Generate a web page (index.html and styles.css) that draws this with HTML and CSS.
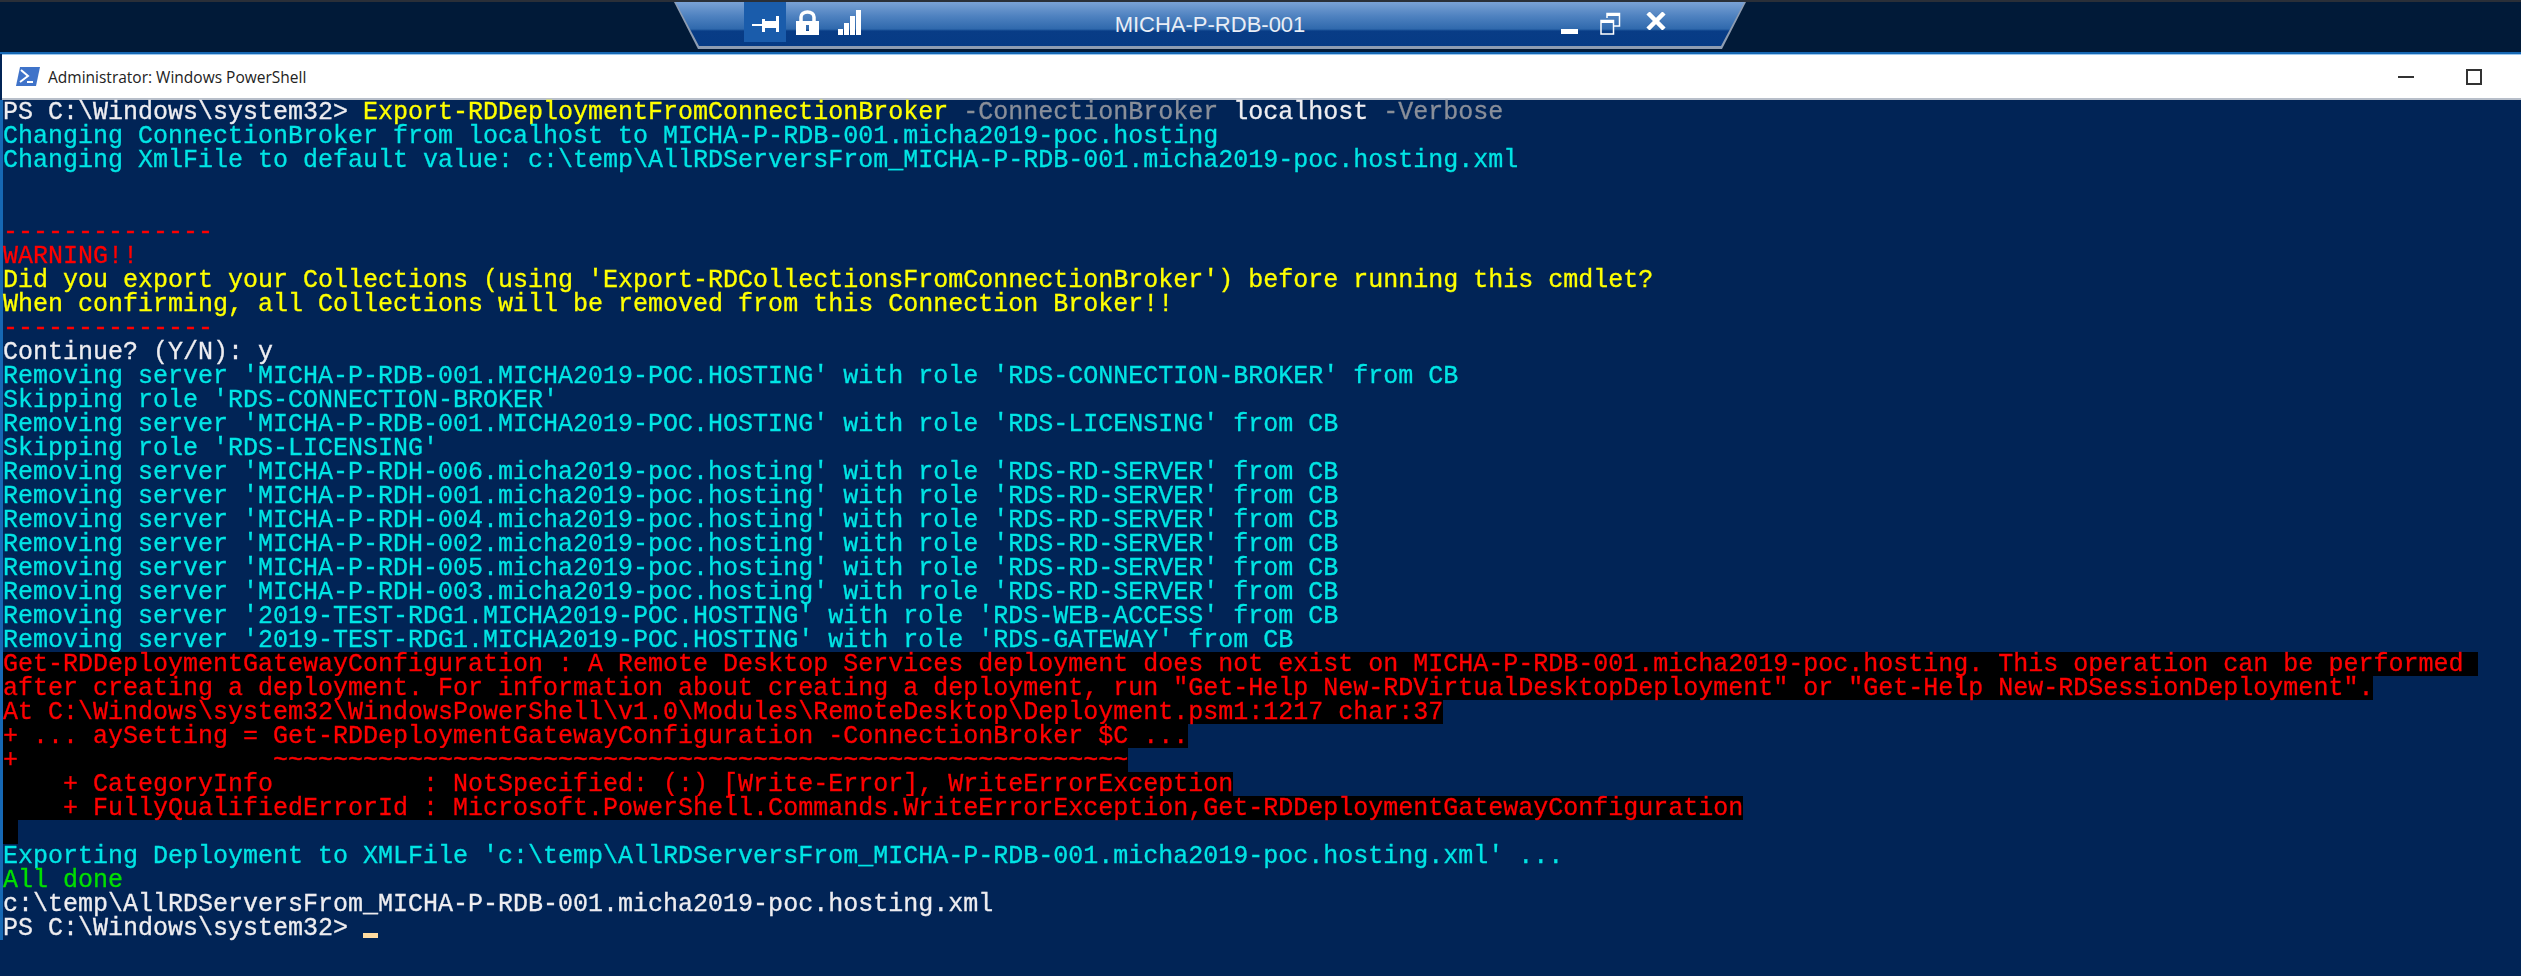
FILE: index.html
```html
<!DOCTYPE html>
<html lang="en">
<head>
<meta charset="utf-8">
<title>Administrator: Windows PowerShell</title>
<link rel="stylesheet" href="styles.css">
</head>
<body>
<header class="rdp">
  <div class="rdp-edge">
    <div class="rdp-tab">
      <div class="rdp-left">
        <span class="pin-box">
          <svg class="pin" width="27" height="18" viewBox="0 0 27 18"><path d="M0 9h11" fill="none" stroke="#fff" stroke-width="2"/><path d="M10 3h3v13h-3zM13 5h11v7H13zM24 0h3v16h-3z" fill="#fff"/></svg>
        </span>
        <svg width="23" height="25" viewBox="0 0 23 25"><path d="M0 11h23v14H0z M10 15v6h3v-6z" fill="#fff" fill-rule="evenodd"/><path d="M5 11V7a6.500 5 0 0 1 13 0v4" fill="none" stroke="#fff" stroke-width="3.500"/></svg>
        <svg width="23" height="25" viewBox="0 0 23 25"><path d="M0 19h5v6H0zM6 13h5v12H6zM12 6h5v19h-5zM18 0h5v25h-5z" fill="#fff"/></svg>
      </div>
      <div class="rdp-title">MICHA-P-RDB-001</div>
      <div class="rdp-right">
        <svg class="ctl-min" width="17" height="5" viewBox="0 0 17 5"><path d="M0 0h17v5H0z" fill="#fff"/></svg>
        <svg width="21" height="23" viewBox="0 0 21 23"><path d="M7 6V1.500h12.500V14H14" fill="none" stroke="#fff" stroke-width="1.500"/><path d="M7 1h13v3H7z" fill="#fff"/><path d="M1 8.500h12.500v13.500H1z" fill="none" stroke="#fff" stroke-width="1.500"/><path d="M1 8h13v3H1z" fill="#fff"/></svg>
        <svg width="20" height="18" viewBox="0 0 20 18"><path d="M2 1l16 16M18 1L2 17" fill="none" stroke="#fff" stroke-width="4.500"/></svg>
      </div>
    </div>
  </div>
</header>
<main class="window">
  <div class="titlebar">
    <svg class="ps-icon" width="25" height="19" viewBox="0 0 25 19"><path d="M5 0h20l-4 19H1z" fill="#3f73c9"/><path d="M6 3l7 6-8 6" fill="none" stroke="#fff" stroke-width="2"/><path d="M12 15h6" stroke="#fff" stroke-width="2"/></svg>
    <span class="title-text">Administrator: Windows PowerShell</span>
    <svg class="win-min" width="16" height="2" viewBox="0 0 16 2"><path d="M0 0h16v2H0z" fill="#333"/></svg>
    <svg class="win-max" width="16" height="16" viewBox="0 0 16 16"><path d="M1 1h14v14H1z" fill="none" stroke="#333" stroke-width="2"/></svg>
  </div>
  <div class="console">
    <div class="line"><span class="prompt">PS C:\Windows\system32&gt; </span><span class="yellow">Export-RDDeploymentFromConnectionBroker</span><span class="gray"> -ConnectionBroker </span><span class="prompt">localhost</span><span class="gray"> -Verbose</span></div>
    <div class="line cyan">Changing ConnectionBroker from localhost to MICHA-P-RDB-001.micha2019-poc.hosting</div>
    <div class="line cyan">Changing XmlFile to default value: c:\temp\AllRDServersFrom_MICHA-P-RDB-001.micha2019-poc.hosting.xml</div>
    <div class="line"> </div>
    <div class="line"> </div>
    <div class="line red">--------------</div>
    <div class="line red">WARNING!!</div>
    <div class="line yellow">Did you export your Collections (using 'Export-RDCollectionsFromConnectionBroker') before running this cmdlet?</div>
    <div class="line yellow">When confirming, all Collections will be removed from this Connection Broker!!</div>
    <div class="line red">--------------</div>
    <div class="line prompt">Continue? (Y/N): y</div>
    <div class="line cyan">Removing server 'MICHA-P-RDB-001.MICHA2019-POC.HOSTING' with role 'RDS-CONNECTION-BROKER' from CB</div>
    <div class="line cyan">Skipping role 'RDS-CONNECTION-BROKER'</div>
    <div class="line cyan">Removing server 'MICHA-P-RDB-001.MICHA2019-POC.HOSTING' with role 'RDS-LICENSING' from CB</div>
    <div class="line cyan">Skipping role 'RDS-LICENSING'</div>
    <div class="line cyan">Removing server 'MICHA-P-RDH-006.micha2019-poc.hosting' with role 'RDS-RD-SERVER' from CB</div>
    <div class="line cyan">Removing server 'MICHA-P-RDH-001.micha2019-poc.hosting' with role 'RDS-RD-SERVER' from CB</div>
    <div class="line cyan">Removing server 'MICHA-P-RDH-004.micha2019-poc.hosting' with role 'RDS-RD-SERVER' from CB</div>
    <div class="line cyan">Removing server 'MICHA-P-RDH-002.micha2019-poc.hosting' with role 'RDS-RD-SERVER' from CB</div>
    <div class="line cyan">Removing server 'MICHA-P-RDH-005.micha2019-poc.hosting' with role 'RDS-RD-SERVER' from CB</div>
    <div class="line cyan">Removing server 'MICHA-P-RDH-003.micha2019-poc.hosting' with role 'RDS-RD-SERVER' from CB</div>
    <div class="line cyan">Removing server '2019-TEST-RDG1.MICHA2019-POC.HOSTING' with role 'RDS-WEB-ACCESS' from CB</div>
    <div class="line cyan">Removing server '2019-TEST-RDG1.MICHA2019-POC.HOSTING' with role 'RDS-GATEWAY' from CB</div>
    <div class="line err"><span>Get-RDDeploymentGatewayConfiguration : A Remote Desktop Services deployment does not exist on MICHA-P-RDB-001.micha2019-poc.hosting. This operation can be performed </span></div>
    <div class="line err"><span>after creating a deployment. For information about creating a deployment, run "Get-Help New-RDVirtualDesktopDeployment" or "Get-Help New-RDSessionDeployment".</span></div>
    <div class="line err"><span>At C:\Windows\system32\WindowsPowerShell\v1.0\Modules\RemoteDesktop\Deployment.psm1:1217 char:37</span></div>
    <div class="line err"><span>+ ... aySetting = Get-RDDeploymentGatewayConfiguration -ConnectionBroker $C ...</span></div>
    <div class="line err"><span>+                 ~~~~~~~~~~~~~~~~~~~~~~~~~~~~~~~~~~~~~~~~~~~~~~~~~~~~~~~~~</span></div>
    <div class="line err"><span>    + CategoryInfo          : NotSpecified: (:) [Write-Error], WriteErrorException</span></div>
    <div class="line err"><span>    + FullyQualifiedErrorId : Microsoft.PowerShell.Commands.WriteErrorException,Get-RDDeploymentGatewayConfiguration</span></div>
    <div class="line err"><span> </span></div>
    <div class="line cyan">Exporting Deployment to XMLFile 'c:\temp\AllRDServersFrom_MICHA-P-RDB-001.micha2019-poc.hosting.xml' ...</div>
    <div class="line green">All done</div>
    <div class="line prompt">c:\temp\AllRDServersFrom_MICHA-P-RDB-001.micha2019-poc.hosting.xml</div>
    <div class="line prompt">PS C:\Windows\system32&gt; <span class="cursor"></span></div>
  </div>
</main>
</body>
</html>
```

FILE: styles.css
```css
html, body { margin: 0; height: 100%; background: #012456; overflow: hidden; }

.rdp { background: #011a38; height: 52px; border-top: 2px solid #2a2f38; box-sizing: border-box; }
.rdp-edge { width: 1072px; height: 47px; margin-left: 674px; background: #8d9cb2; clip-path: polygon(0 0, 100% 0, calc(100% - 24px) 100%, 24px 100%); }
.rdp-tab {
  height: 44px;
  display: grid;
  grid-template-columns: 1fr auto 1fr;
  align-items: start;
  clip-path: polygon(1.5px 0, calc(100% - 1.5px) 0, calc(100% - 25px) 100%, 25px 100%);
  background: linear-gradient(#7aa2d6 0, #4f82c0 14px, #2f69ad 27px, #083c86 29px, #063b85 100%);
}
.rdp-left { display: flex; align-items: flex-start; padding-left: 70px; }
.pin-box { width: 42px; height: 40px; background: #1a5cab; display: flex; justify-content: center; padding-top: 14px; box-sizing: border-box; margin-right: 10px; }
.rdp-left > svg { margin-top: 8px; margin-right: 19px; }
.rdp-title { color: #e9eef6; font: 22px/46px "Liberation Sans", sans-serif; }
.rdp-right { display: flex; justify-content: flex-end; align-items: flex-start; padding-right: 80px; gap: 25px; padding-top: 10px; }
.ctl-min { margin-top: 17px; margin-right: -3px; }

.window { border-top: 2px solid #1668b4; }
.titlebar {
  height: 46px;
  box-sizing: border-box;
  margin-left: 2px;
  background: #fff;
  border-top: 1px solid #9cc8ee;
  border-bottom: 2px solid #b8bfca;
  display: flex;
  align-items: center;
}
.ps-icon { margin-left: 13px; }
.title-text { margin-left: 8px; font: 15.500px "Open Sans", sans-serif; color: #222; flex: 1; }
.win-min { margin-right: 52px; }
.win-max { margin-right: 39px; }

.console {
  background: #012456;
  border-left: 3px solid #1668b4;
  color: #eeedf0;
  font: 25px/26px "Liberation Mono", monospace;
  -webkit-text-stroke: 0.3px currentColor;
  filter: blur(0.4px);
}
.line { height: 24px; white-space: pre; }
.prompt { color: #eeedf0; }
.yellow { color: #ffff00; }
.gray { color: #8a8f99; }
.cyan { color: #00e5e5; }
.red { color: #ff0000; }
.green { color: #00e000; }
.err { color: #ff0000; }
.err span { background: #000; display: inline-block; height: 24px; }
.cursor { display: inline-block; width: 15px; height: 5px; background: #ffdca0; vertical-align: -3px; }
```
